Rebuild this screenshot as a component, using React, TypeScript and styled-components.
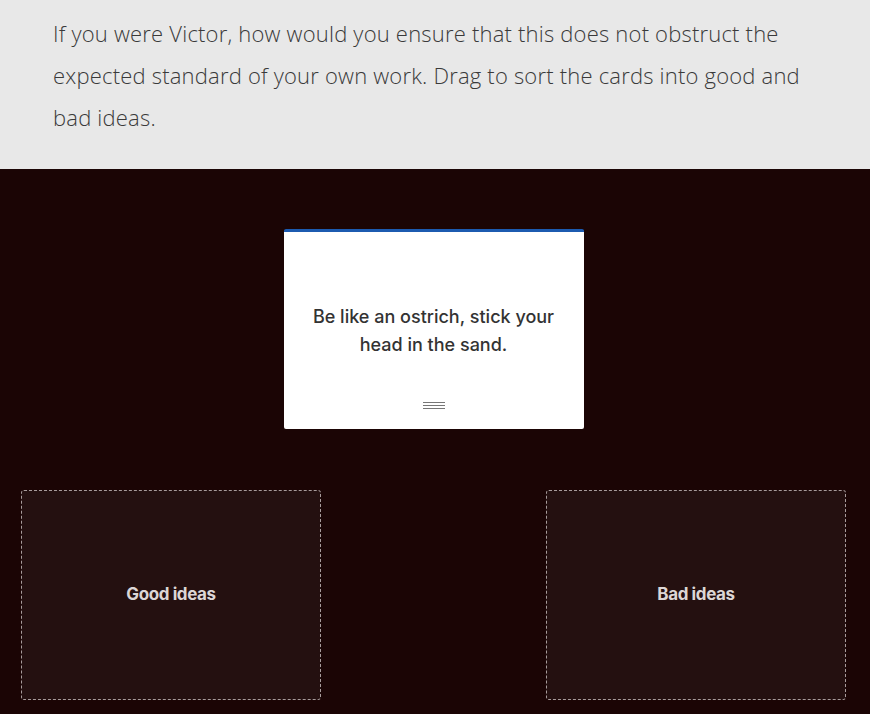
import React from 'react'
import styled, {createGlobalStyle} from 'styled-components'

const Global = createGlobalStyle`
  html, body {
    margin: 0;
    padding: 0;
    background: #1b0505;
  }
  * {
    box-sizing: border-box;
  }
`

const Page = styled.div`
  width: 870px;
  height: 714px;
  overflow: hidden;
  display: flex;
  flex-direction: column;
`

const Prompt = styled.div`
  background: #e8e8e8;
  padding: 12px 52px 31px 53px;
  font-family: "Open Sans", "Liberation Sans", sans-serif;
  font-weight: 300;
  font-size: 22px;
  letter-spacing: 0.2px;
  line-height: 42px;
  color: #3a3a3a;
`

const Board = styled.div`
  flex: 1;
  background: #1b0505;
  padding: 60px 24px 0 21px;
  display: flex;
  flex-direction: column;
`

const CardRow = styled.div`
  display: flex;
  justify-content: center;
`

const Card = styled.div`
  width: 300px;
  height: 200px;
  background: #fff;
  border-top: 3px solid #1c5bb0;
  border-radius: 2px;
  display: flex;
  flex-direction: column;
  align-items: center;
  justify-content: center;
  position: relative;
  padding: 0 20px;
`

const CardText = styled.div`
  font-family: Inter, "Noto Sans", sans-serif;
  font-weight: 500;
  font-size: 18px;
  line-height: 28px;
  color: #333;
  text-align: center;
  letter-spacing: 0;
  margin-top: 1px;
`

const Handle = styled.div`
  position: absolute;
  bottom: 20px;
  left: 50%;
  transform: translateX(-50%);
  width: 22px;
  height: 7px;
  border-top: 1px solid #777;
  border-bottom: 1px solid #777;
  &::after {
    content: '';
    display: block;
    margin-top: 2px;
    height: 1px;
    background: #777;
  }
`

const Zones = styled.div`
  margin-top: 61px;
  display: flex;
  justify-content: space-between;
`

const Zone = styled.div`
  width: 300px;
  height: 210px;
  background: #241010;
  border: 1px dashed #a89c9c;
  border-radius: 3px;
  display: flex;
  align-items: center;
  justify-content: center;
  font-family: Inter, "Noto Sans", sans-serif;
  font-weight: 700;
  font-size: 17px;
  letter-spacing: -0.4px;
  color: #dcd6d6;
  padding-bottom: 3px;
`

export default function App() {
    return (
        <Page>
            <Global/>
            <Prompt>
                If you were Victor, how would you ensure that this does not obstruct the expected standard
                of your own work. Drag to sort the cards into good and bad ideas.
            </Prompt>
            <Board>
                <CardRow>
                    <Card>
                        <CardText>Be like an ostrich, stick your<br/>head in the sand.</CardText>
                        <Handle/>
                    </Card>
                </CardRow>
                <Zones>
                    <Zone>Good ideas</Zone>
                    <Zone>Bad ideas</Zone>
                </Zones>
            </Board>
        </Page>
    )
}
